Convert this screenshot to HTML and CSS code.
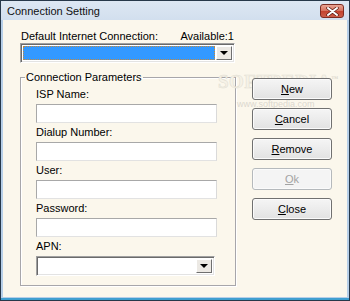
FILE: index.html
```html
<!DOCTYPE html>
<html>
<head>
    <title>Connection Setting</title>
    <link rel="stylesheet" href="styles.css">
</head>
<body>
    <div class="window">
        <div class="titlebar">
            <span class="title">Connection Setting</span>
            <div class="close-btn">
                <svg width="13" height="9" viewBox="0 0 13 9">
                    <path d="M2 1 L11 8 M11 1 L2 8" stroke="#5a1a12" stroke-width="3.4" stroke-linecap="round"/>
                    <path d="M2 1 L11 8 M11 1 L2 8" stroke="#fff" stroke-width="2" stroke-linecap="round"/>
                </svg>
            </div>
        </div>

        <div class="client">
            <!-- watermark -->
            <div class="mark">SOFTPEDIA<sup>™</sup></div>
            <div class="mark-url">www.softpedia.com</div>

            <div class="left">
                <div class="head">
                    <span>Default Internet Connection:</span>
                    <span>Available:1</span>
                </div>
                <div class="combo">
                    <div class="combo-field selected"></div>
                    <div class="drop"><span class="arrow"></span></div>
                </div>

                <fieldset class="group">
                    <legend>Connection Parameters</legend>
                    <div class="fields">
                        <label for="isp">ISP Name:</label>
                        <input type="text" id="isp">

                        <label for="dialup">Dialup Number:</label>
                        <input type="text" id="dialup">

                        <label for="user">User:</label>
                        <input type="text" id="user">

                        <label for="password">Password:</label>
                        <input type="text" id="password">

                        <label>APN:</label>
                        <div class="combo small">
                            <div class="combo-field"></div>
                            <div class="drop"><span class="arrow"></span></div>
                        </div>
                    </div>
                </fieldset>
            </div>

            <div class="buttons">
                <button><u>N</u>ew</button>
                <button><u>C</u>ancel</button>
                <button><u>R</u>emove</button>
                <button class="disabled"><u>O</u>k</button>
                <button><u>C</u>lose</button>
            </div>
        </div>
    </div>
</body>
</html>
```

FILE: styles.css
```css
* {
    box-sizing: border-box;
}

body {
    margin: 0;
    font-family: "Liberation Sans", Arial, sans-serif;
    font-size: 11px;
    color: #000;
}

.window {
    width: 350px;
    height: 301px;
    border: 1px solid #27384a;
    background: #b7cfe8;
    box-shadow: inset 0 -2px 0 #3f9fd0;
    display: flex;
    flex-direction: column;
    padding: 0 2px 3px;
}

.titlebar {
    height: 19px;
    margin: 0 -2px;
    padding: 0 5px 0 6px;
    display: flex;
    align-items: center;
    justify-content: space-between;
    background: linear-gradient(#dde7f3, #d2dfee);
}

.title {
    font-size: 11px;
    color: #111;
}

.close-btn {
    width: 24px;
    height: 14px;
    margin-top: 1px;
    border: 1px solid #7d2c22;
    border-radius: 3px;
    background: linear-gradient(#eaa595, #d6705c 50%, #c4412c 51%, #cc5e49);
    display: flex;
    align-items: center;
    justify-content: center;
}

.client {
    flex: 1;
    position: relative;
    display: flex;
    padding: 10px 0 0 17px;
    background: #fbf7ec;
}

.left {
    width: 216px;
}

.head {
    display: flex;
    justify-content: space-between;
    height: 13px;
    line-height: 13px;
    padding: 0 2px 0 1px;
}

.combo {
    width: 215px;
    height: 20px;
    display: flex;
    padding: 2px;
    background: #fff;
    border: 1px solid;
    border-color: #a0a0a0 #fff #fff #a0a0a0;
    box-shadow: inset 1px 1px 0 #6a6a6a, inset -1px -1px 0 #e3e3e3;
}

.combo-field {
    flex: 1;
}

.combo-field.selected {
    background: #3399ff;
    border: 1px dotted #c4883a;
    margin-right: 1px;
}

.drop {
    width: 16px;
    display: flex;
    align-items: center;
    justify-content: center;
    background: #ece9e4;
    border: 1px solid;
    border-color: #fff #6f6f6f #6f6f6f #fff;
}

.arrow {
    width: 0;
    height: 0;
    border-left: 4px solid transparent;
    border-right: 4px solid transparent;
    border-top: 4px solid #000;
}

.group {
    margin: 8px 0 0;
    padding: 4px 0 9px 4px;
    width: 216px;
    border: 1px solid #a7a6aa;
    box-shadow: inset 1px 1px 0 #fff, 1px 1px 0 #fff;
}

.group legend {
    padding: 0 1px;
    line-height: 13px;
}

.fields {
    display: flex;
    flex-direction: column;
    padding-left: 11px;
}

label {
    display: block;
    height: 13px;
    line-height: 13px;
    margin-bottom: 3px;
}

input[type="text"] {
    display: block;
    width: 181px;
    height: 19px;
    margin: 0 0 3px;
    padding: 0;
    background: #fff;
    border: 1px solid;
    border-color: #a8a8a8 #dadada #e2e2e2 #a8a8a8;
    outline: none;
}

.combo.small {
    width: 179px;
}

.buttons {
    position: relative;
    display: flex;
    flex-direction: column;
    margin: 48px 0 0 16px;
}

button {
    width: 80px;
    height: 22px;
    margin-bottom: 8px;
    padding: 0;
    font-family: "Liberation Sans", Arial, sans-serif;
    font-size: 11px;
    color: #000;
    border: 1px solid #707070;
    border-radius: 3px;
    background: linear-gradient(#f5f5f5, #ececec 50%, #e2e2e2);
    box-shadow: inset 0 0 0 1px #fbfbfb;
}

button.disabled {
    color: #a3a3a3;
    border-color: #b5b9bc;
    background: #f4f4f4;
}

.mark {
    position: absolute;
    left: 215px;
    top: 48px;
    font-family: "Liberation Serif", serif;
    font-weight: bold;
    font-size: 19px;
    line-height: 22px;
    letter-spacing: 0.5px;
    color: #f6f2e7;
    -webkit-text-stroke: 0.6px #e3dfd4;
    pointer-events: none;
}

.mark sup {
    font-size: 7px;
    -webkit-text-stroke: 0;
    color: #ddd9cf;
}

.mark-url {
    position: absolute;
    left: 234px;
    top: 79px;
    font-size: 9px;
    line-height: 10px;
    color: #dcd8cf;
    pointer-events: none;
}
```
